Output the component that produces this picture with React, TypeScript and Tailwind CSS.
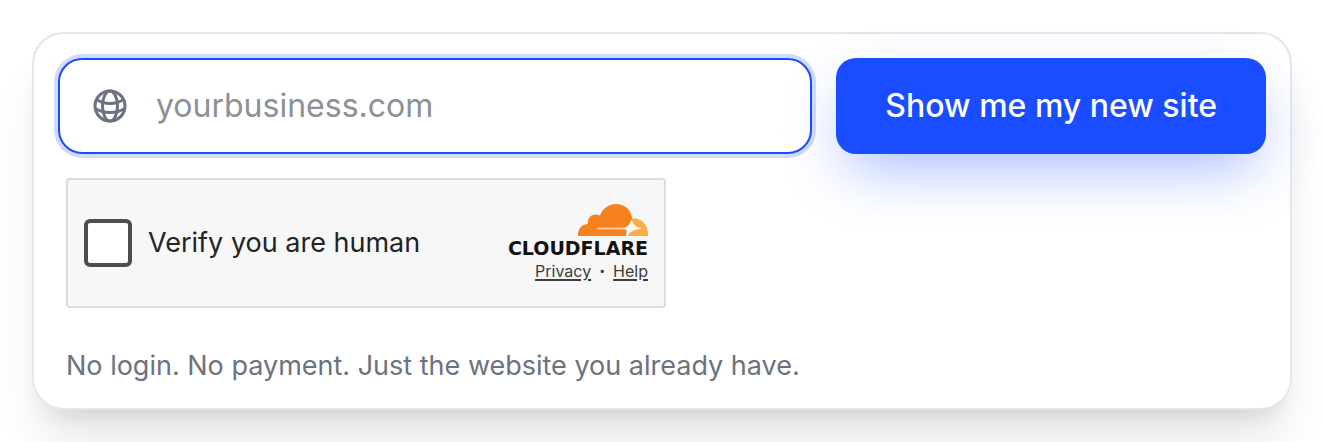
import { useState } from "react";
import type { FormEvent } from "react";

function GlobeIcon() {
  return (
    <svg className="size-9 shrink-0 text-[#6b7280]" viewBox="0 0 36 36" fill="none" stroke="currentColor" strokeWidth="3" aria-hidden="true">
      <circle cx="18" cy="18" r="15" />
      <ellipse cx="18" cy="18" rx="7.5" ry="15" />
      <path d="M4.500 11.500C9 14.500 13 15.500 18 15.500S27 14.500 31.500 11.500" />
      <path d="M3.500 20.500C8 23.500 13 24.500 18 24.500S28 23.500 32.500 20.500" />
    </svg>
  );
}

function CloudflareMark() {
  return (
    <svg className="h-8 w-[70px]" viewBox="0 0 70 32" aria-hidden="true">
      <path fill="#f6821f" d="M0 32C-0.500 25 4 20 10 20C8.500 13.500 15 8 22 11.500C25 4 31 0 38 0C46 0 52 5 54 13C54.500 16 53 20 51 23.500L48 32Z" />
      <path fill="#fbad41" d="M50 32C50.500 29 52 27 54 26V14.500C63 13.500 70.500 20 70 32Z" />
      <path fill="#fbc998" d="M19 23.500H48V25.500H19Z" />
      <path fill="#f7f7f7" d="M45 24.500C50 23 52 20 53.500 15C55 20 57 23 64 24.500C57 25.500 52 27 50 32H48L48.500 26C48 25.500 47 25 45 24.500Z" />
    </svg>
  );
}

function Turnstile() {
  const [checked, setChecked] = useState(false);

  return (
    <div className="flex w-full max-w-[600px] items-center justify-between rounded-sm border-2 border-[#dcdcdc] bg-[#f7f7f7] px-4 py-6 font-['Inter',sans-serif]">
      <label className="flex items-center gap-4 text-[27px] leading-8 text-[#232323]">
        <input
          type="checkbox"
          checked={checked}
          onChange={(e) => setChecked(e.target.checked)}
          className="size-12 appearance-none rounded-md border-4 border-[#4d4d4d] bg-white checked:bg-[#4d4d4d]"
        />
        Verify you are human
      </label>
      <div className="flex flex-col items-end">
        <CloudflareMark />
        <span className="font-['DejaVu_Sans',sans-serif] text-[19px] leading-6 font-bold text-[#111111]">CLOUDFLARE</span>
        <div className="flex items-center gap-2 text-base leading-[22px] text-[#3c3c3c]">
          <a href="#privacy" className="underline decoration-2 underline-offset-2">Privacy</a>
          <span className="font-black">·</span>
          <a href="#help" className="underline decoration-2 underline-offset-2">Help</a>
        </div>
      </div>
    </div>
  );
}

export default function App() {
  const [url, setUrl] = useState("");

  const onSubmit = (e: FormEvent) => {
    e.preventDefault();
  };

  return (
    <main className="overflow-hidden bg-white p-8 font-['Inter',sans-serif]">
      <form
        onSubmit={onSubmit}
        className="rounded-[32px] border-2 border-[#e5e7eb] bg-white p-6 shadow-[0_40px_50px_-10px_rgba(0,0,0,0.1),0_16px_20px_-12px_rgba(0,0,0,0.1)]"
      >
        <div className="flex items-center gap-6">
          <label className="flex h-24 min-w-0 flex-1 items-center gap-7 rounded-3xl border-2 border-[#1a4dff] bg-white px-8 ring-4 ring-[#1a4dff]/20">
            <GlobeIcon />
            <input
              type="text"
              aria-label="Website address"
              placeholder="yourbusiness.com"
              value={url}
              onChange={(e) => setUrl(e.target.value)}
              className="min-w-0 flex-1 bg-transparent text-[32px] leading-10 text-[#111827] outline-none placeholder:text-[#8b9099]"
            />
          </label>
          <button
            type="submit"
            className="h-24 shrink-0 rounded-[20px] bg-[#1a4dff] px-[49px] text-[32px] leading-10 font-medium text-white shadow-[0_24px_60px_-12px_rgba(26,77,255,0.4)]"
          >
            Show me my new site
          </button>
        </div>
        <div className="px-2 pt-6">
          <Turnstile />
          <p className="mt-10 text-[27px] leading-9 text-[#6b7280]">
            No login. No payment. Just the website you already have.
          </p>
        </div>
      </form>
    </main>
  );
}
